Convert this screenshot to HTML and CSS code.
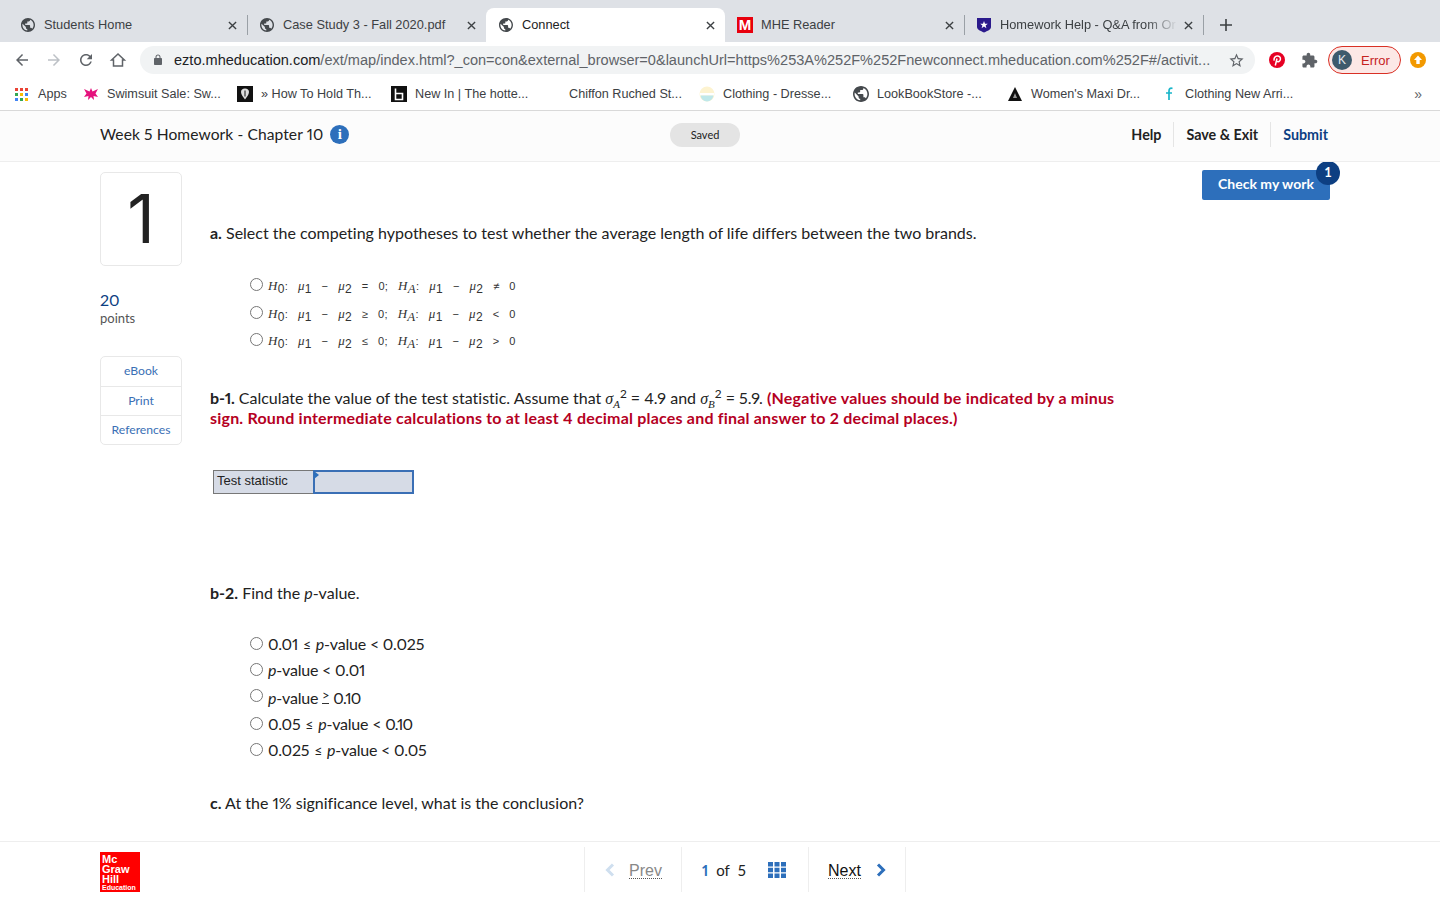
FILE: index.html
```html
<!DOCTYPE html>
<html lang="en">
<head>
  <meta charset="UTF-8" />
  <title>Connect</title>
  <link rel="stylesheet" href="styles.css">
</head>
<body>
  <svg class="sprite" xmlns="http://www.w3.org/2000/svg">
    <symbol id="globe" viewBox="2 2 20 20"><path d="M12 2C6.48 2 2 6.48 2 12s4.48 10 10 10 10-4.48 10-10S17.52 2 12 2zm-1 17.93c-3.95-.49-7-3.85-7-7.93 0-.62.08-1.21.21-1.79L9 15v1c0 1.1.9 2 2 2v1.93zm6.9-2.54c-.26-.81-1-1.39-1.9-1.39h-1v-3c0-.55-.45-1-1-1H8v-2h2c.55 0 1-.45 1-1V7h2c1.1 0 2-.9 2-2v-.41c2.93 1.19 5 4.06 5 7.41 0 2.08-.8 3.97-2.1 5.39z"/></symbol>
    <symbol id="close" viewBox="0 0 10 10"><path d="M1 1l8 8M9 1l-8 8" fill="none" stroke="currentColor" stroke-width="1.5"/></symbol>
  </svg>

  <div class="tabstrip">
    <div class="tab">
      <svg class="favicon"><use href="#globe"/></svg>
      <span class="tab-title">Students Home</span>
      <svg class="tab-close"><use href="#close"/></svg>
    </div>
    <div class="tab tab-sep">
      <svg class="favicon"><use href="#globe"/></svg>
      <span class="tab-title">Case Study 3 - Fall 2020.pdf</span>
      <svg class="tab-close"><use href="#close"/></svg>
    </div>
    <div class="tab tab-active">
      <svg class="favicon"><use href="#globe"/></svg>
      <span class="tab-title">Connect</span>
      <svg class="tab-close"><use href="#close"/></svg>
    </div>
    <div class="tab">
      <span class="favicon-m">M</span>
      <span class="tab-title">MHE Reader</span>
      <svg class="tab-close"><use href="#close"/></svg>
    </div>
    <div class="tab tab-sep tab-last">
      <svg class="favicon" viewBox="0 0 16 16"><path d="M1 1h14v9c0 2.5-3.5 4-7 5.5C4.500 14 1 12.500 1 10z" fill="#2b1a8c"/><path d="M8 4l1 2.700h2.800L9.600 8.400l.8 2.800L8 9.600l-2.400 1.600.8-2.800-2.200-1.700H7z" fill="#fff"/></svg>
      <span class="tab-title tab-fade">Homework Help - Q&amp;A from Or</span>
      <svg class="tab-close"><use href="#close"/></svg>
    </div>
    <svg class="tab-new" viewBox="0 0 12 12"><path d="M6 0v12M0 6h12" fill="none" stroke="#3c4043" stroke-width="1.600"/></svg>
  </div>

  <div class="toolbar">
    <svg class="nav-icon" viewBox="0 0 24 24"><path fill="#5f6368" d="M20 11H7.830l5.590-5.590L12 4l-8 8 8 8 1.410-1.410L7.830 13H20v-2z"/></svg>
    <svg class="nav-icon" viewBox="0 0 24 24"><path fill="#bdc1c6" d="M4 11h12.170l-5.590-5.590L12 4l8 8-8 8-1.410-1.410L16.170 13H4v-2z"/></svg>
    <svg class="nav-icon" viewBox="0 0 24 24"><path fill="#5f6368" d="M17.650 6.350C16.200 4.900 14.210 4 12 4c-4.420 0-7.990 3.580-7.990 8s3.570 8 7.990 8c3.730 0 6.840-2.550 7.730-6h-2.080c-.82 2.330-3.040 4-5.650 4-3.310 0-6-2.690-6-6s2.690-6 6-6c1.660 0 3.140.69 4.220 1.780L13 11h7V4l-2.350 2.350z"/></svg>
    <svg class="nav-icon" viewBox="0 0 24 24"><path fill="none" stroke="#5f6368" stroke-width="2" d="M12 4L3.500 12H6v8h12v-8h2.500z"/></svg>
    <div class="omnibox">
      <svg class="lock" viewBox="0 0 24 24"><path fill="#5f6368" d="M18 8h-1V6c0-2.760-2.240-5-5-5S7 3.240 7 6v2H6c-1.100 0-2 .9-2 2v10c0 1.100.9 2 2 2h12c1.100 0 2-.9 2-2V10c0-1.100-.9-2-2-2zM9 6c0-1.660 1.340-3 3-3s3 1.340 3 3v2H9V6z"/></svg>
      <span class="url"><b>ezto.mheducation.com</b>/ext/map/index.html?_con=con&amp;external_browser=0&amp;launchUrl=https%253A%252F%252Fnewconnect.mheducation.com%252F#/activit...</span>
      <svg class="star" viewBox="0 0 24 24"><path fill="#5f6368" d="M22 9.240l-7.190-.62L12 2 9.190 8.630 2 9.240l5.460 4.730L5.820 21 12 17.270 18.180 21l-1.630-7.030L22 9.240zM12 15.400l-3.760 2.270 1-4.280-3.320-2.880 4.380-.38L12 6.100l1.710 4.040 4.380.38-3.320 2.880 1 4.280L12 15.400z"/></svg>
    </div>
    <svg class="ext-pin" viewBox="0 0 16 16"><circle cx="8" cy="8" r="8" fill="#e60023"/><path d="M6.300 13.500L8 6.500M5.300 8.600C4.300 6.400 6 4 8.300 4c2.200 0 3.400 1.500 3.100 3.400-.3 1.900-2.500 3-3.600 1.800" fill="none" stroke="#fff" stroke-width="1.500"/></svg>
    <svg class="ext-puzzle" viewBox="0 0 24 24"><path fill="#5f6368" d="M20.500 11H19V7c0-1.100-.9-2-2-2h-4V3.500C13 2.120 11.880 1 10.500 1S8 2.120 8 3.500V5H4c-1.100 0-1.990.9-1.990 2v3.800H3.500c1.490 0 2.700 1.210 2.700 2.700s-1.210 2.700-2.700 2.700H2V20c0 1.100.9 2 2 2h3.800v-1.500c0-1.490 1.210-2.700 2.700-2.700 1.490 0 2.700 1.210 2.700 2.700V22H17c1.100 0 2-.9 2-2v-4h1.500c1.380 0 2.500-1.120 2.500-2.500S21.880 11 20.500 11z"/></svg>
    <div class="profile"><span class="avatar">K</span><span class="profile-error">Error</span></div>
    <svg class="update" viewBox="0 0 16 16"><circle cx="8" cy="8" r="8" fill="#f29900"/><path d="M8 3.500L12 8H9.700v4H6.300V8H4z" fill="#fff"/></svg>
  </div>

  <div class="bookmarks">
    <div class="bm bm-apps">
      <svg class="favicon" viewBox="0 0 13 13">
        <rect width="3" height="3" fill="#ea4335"/><rect x="5" width="3" height="3" fill="#ea4335"/><rect x="10" width="3" height="3" fill="#ea4335"/>
        <rect y="5" width="3" height="3" fill="#34a853"/><rect x="5" y="5" width="3" height="3" fill="#fbbc04"/><rect x="10" y="5" width="3" height="3" fill="#4285f4"/>
        <rect y="10" width="3" height="3" fill="#4285f4"/><rect x="5" y="10" width="3" height="3" fill="#34a853"/><rect x="10" y="10" width="3" height="3" fill="#fbbc04"/>
      </svg>
      <span>Apps</span>
    </div>
    <div class="bm">
      <svg class="favicon" viewBox="0 0 16 16"><path d="M8 2l1.500 3.500L15 3l-2.500 4.500L15 11l-4.500-1L11 14 8 11l-3 3 .5-4L1 11l2.500-3.500L1 3l5.500 2.500z" fill="#e5127d"/></svg>
      <span>Swimsuit Sale: Sw...</span>
    </div>
    <div class="bm">
      <svg class="favicon" viewBox="0 0 16 16"><rect width="16" height="16" fill="#111"/><path d="M8 2.500c2.500 0 4 1.500 4 3.500 0 3-2.500 5-4 7.500C6.500 11 4 9 4 6c0-2 1.500-3.500 4-3.500z" fill="#ddd"/><path d="M8 4.500v6" stroke="#111"/></svg>
      <span>» How To Hold Th...</span>
    </div>
    <div class="bm">
      <svg class="favicon" viewBox="0 0 16 16"><rect width="16" height="16" fill="#111"/><path d="M4.500 2.500v11h7v-6h-7" fill="none" stroke="#fff" stroke-width="1.600"/></svg>
      <span>New In | The hotte...</span>
    </div>
    <div class="bm">
      <span class="favicon"></span>
      <span>Chiffon Ruched St...</span>
    </div>
    <div class="bm">
      <svg class="favicon" viewBox="0 0 16 16"><circle cx="8" cy="8" r="7.500" fill="#fdf3d0"/><path d="M.8 7h14.400v2.500H.8z" fill="#fff"/><path d="M1.500 9.500h13A7.500 7.500 0 0 1 8 15.500a7.500 7.500 0 0 1-6.500-6z" fill="#bfe8ea"/></svg>
      <span>Clothing - Dresse...</span>
    </div>
    <div class="bm">
      <svg class="favicon"><use href="#globe"/></svg>
      <span>LookBookStore -...</span>
    </div>
    <div class="bm">
      <svg class="favicon" viewBox="0 0 16 16"><path d="M8 1l7 14H1z" fill="#111"/><path d="M8 7l2 5H6z" fill="#999"/></svg>
      <span>Women's Maxi Dr...</span>
    </div>
    <div class="bm">
      <svg class="favicon" viewBox="0 0 16 16"><path d="M11.500 2.500C9.500 1.500 8 2.500 8 5v9M5 7h6" fill="none" stroke="#19b5c9" stroke-width="1.700"/></svg>
      <span>Clothing New Arri...</span>
    </div>
    <span class="bm-more">»</span>
  </div>

  <header class="hw-header">
    <div class="hw-title">
      <span>Week 5 Homework - Chapter 10</span>
      <span class="info-icon">i</span>
    </div>
    <span class="saved-pill">Saved</span>
    <nav class="hw-actions">
      <a>Help</a>
      <a>Save &amp; Exit</a>
      <a class="submit-link">Submit</a>
    </nav>
  </header>

  <main class="content">
    <aside class="side">
      <div class="q-number">1</div>
      <div class="q-points"><span class="points-num">20</span><span class="points-label">points</span></div>
      <div class="side-links">
        <a>eBook</a>
        <a>Print</a>
        <a>References</a>
      </div>
    </aside>

    <section class="question">
      <p class="q-a"><b>a.</b> Select the competing hypotheses to test whether the average length of life differs between the two brands.</p>

      <div class="math-options">
        <label class="math-row"><input type="radio" name="hyp"><span class="math"><i>H</i><sub>0</sub>: <i>μ</i><sub>1</sub> − <i>μ</i><sub>2</sub> = 0; <i>H</i><sub><i>A</i></sub>: <i>μ</i><sub>1</sub> − <i>μ</i><sub>2</sub> ≠ 0</span></label>
        <label class="math-row"><input type="radio" name="hyp"><span class="math"><i>H</i><sub>0</sub>: <i>μ</i><sub>1</sub> − <i>μ</i><sub>2</sub> ≥ 0; <i>H</i><sub><i>A</i></sub>: <i>μ</i><sub>1</sub> − <i>μ</i><sub>2</sub> &lt; 0</span></label>
        <label class="math-row"><input type="radio" name="hyp"><span class="math"><i>H</i><sub>0</sub>: <i>μ</i><sub>1</sub> − <i>μ</i><sub>2</sub> ≤ 0; <i>H</i><sub><i>A</i></sub>: <i>μ</i><sub>1</sub> − <i>μ</i><sub>2</sub> &gt; 0</span></label>
      </div>

      <p class="q-b1"><b class="b1-tag">b-1.</b> Calculate the value of the test statistic. Assume that <span class="sigma"><i>σ</i><sub><i>A</i></sub></span><sup>2</sup> = 4.9 and <span class="sigma"><i>σ</i><sub><i>B</i></sub></span><sup>2</sup> = 5.9. <b class="warn">(Negative values should be indicated by a minus sign. Round intermediate calculations to at least 4 decimal places and final answer to 2 decimal places.)</b></p>

      <div class="stat-table">
        <span class="stat-label">Test statistic</span>
        <span class="stat-input"></span>
      </div>

      <p class="q-b2"><b>b-2.</b> Find the <i>p</i>-value.</p>

      <div class="p-options">
        <label class="p-row"><input type="radio" name="pval"><span>0.01 <span class="le">≤</span> <i>p</i>-value &lt; 0.025</span></label>
        <label class="p-row"><input type="radio" name="pval"><span><i>p</i>-value &lt; 0.01</span></label>
        <label class="p-row p-row-ge"><input type="radio" name="pval"><span><i>p</i>-value <span class="ge">&gt;</span> <span class="tight">0.10</span></span></label>
        <label class="p-row"><input type="radio" name="pval"><span>0.05 <span class="le">≤</span> <i>p</i>-value &lt; <span class="tight">0.10</span></span></label>
        <label class="p-row"><input type="radio" name="pval"><span>0.025 <span class="le">≤</span> <i>p</i>-value &lt; 0.05</span></label>
      </div>

      <p class="q-c"><b>c.</b> At the 1% significance level, what is the conclusion?</p>
    </section>

    <div class="check-wrap">
      <button class="check-btn">Check my work<span class="check-badge">1</span></button>
    </div>
  </main>

  <footer class="hw-footer">
    <div class="mh-logo">
      <span>Mc</span><span>Graw</span><span>Hill</span><span class="mh-edu">Education</span>
    </div>
    <div class="pager">
      <div class="pager-cell pager-prev">
        <svg class="chev" viewBox="0 0 10 14"><path d="M8 1.500L2.500 7 8 12.500" fill="none" stroke="#cfdfef" stroke-width="3"/></svg>
        <a>Prev</a>
      </div>
      <div class="pager-cell pager-mid">
        <span class="page-now">1</span><span class="page-of">of</span><span class="page-total">5</span>
        <svg class="grid-icon" viewBox="0 0 18 16">
          <path fill="#2d6fbb" d="M0 0h5v4.500H0zM6.500 0h5v4.500h-5zM13 0h5v4.500h-5zM0 5.800h5v4.500H0zM6.500 5.800h5v4.500h-5zM13 5.800h5v4.500h-5zM0 11.500h5V16H0zM6.500 11.500h5V16h-5zM13 11.500h5V16h-5z"/>
        </svg>
      </div>
      <div class="pager-cell pager-next">
        <a>Next</a>
        <svg class="chev" viewBox="0 0 10 14"><path d="M2 1.500L7.500 7 2 12.500" fill="none" stroke="#2d6fbb" stroke-width="3"/></svg>
      </div>
    </div>
  </footer>
</body>
</html>
```

FILE: styles.css
```css
* {
  box-sizing: border-box;
}

html, body {
  margin: 0;
  height: 100%;
}

body {
  width: 1440px;
  height: 900px;
  overflow: hidden;
  display: flex;
  flex-direction: column;
  font-family: 'Lato', sans-serif;
  font-variant-ligatures: none;
  font-variant-numeric: proportional-nums;
  color: #222;
  background-color: #fff;
}

p {
  margin: 0;
}

.sprite {
  display: none;
}

/* browser chrome */
.tabstrip {
  height: 42px;
  flex: none;
  display: flex;
  align-items: flex-end;
  padding-left: 8px;
  background-color: #dee1e6;
  font-family: 'Liberation Sans', sans-serif;
  font-size: 12.800px;
  color: #3c4043;
}

.tab {
  position: relative;
  width: 239px;
  height: 34px;
  display: flex;
  align-items: center;
  padding: 0 10px 0 12px;
  border-radius: 8px 8px 0 0;
}

.tab-sep::before,
.tab-last::after {
  content: '';
  position: absolute;
  top: 7px;
  left: 0;
  width: 1px;
  height: 20px;
  background-color: #9aa0a6;
}

.tab-last::after {
  left: auto;
  right: -1px;
}

.tab-active {
  background-color: #fff;
  color: #222;
}

.favicon {
  width: 16px;
  height: 16px;
  flex: none;
  fill: #45494d;
}

.tab .favicon {
  width: 14px;
  height: 14px;
  margin: 0 1px;
}

.tab-last .favicon {
  width: 16px;
  height: 16px;
  margin: 0;
}

.favicon-m {
  width: 16px;
  height: 16px;
  flex: none;
  background-color: #e8000d;
  color: #fff;
  font-weight: 700;
  font-size: 15px;
  line-height: 16px;
  text-align: center;
}

.tab-title {
  flex: 1;
  min-width: 0;
  margin: 0 0 2px 8px;
  white-space: nowrap;
  overflow: hidden;
}

.tab-fade {
  -webkit-mask-image: linear-gradient(to right, #000 82%, transparent 100%);
}

.tab-close {
  width: 9px;
  height: 9px;
  flex: none;
  margin-left: 6px;
  color: #3c4043;
}

.tab-new {
  width: 12px;
  height: 12px;
  align-self: center;
  margin: 8px 0 0 17px;
}

.toolbar {
  height: 36px;
  flex: none;
  display: flex;
  align-items: center;
  padding-left: 13px;
  background-color: #fff;
}

.nav-icon {
  width: 18px;
  height: 18px;
  flex: none;
  margin-right: 14px;
}

.omnibox {
  width: 1115px;
  height: 28px;
  flex: none;
  display: flex;
  align-items: center;
  margin-left: -1px;
  padding: 0 10px 0 12px;
  border-radius: 14px;
  background-color: #f1f3f4;
  font-family: 'Liberation Sans', sans-serif;
  font-size: 14.560px;
  color: #5f6368;
}

.lock {
  width: 12px;
  height: 12px;
  flex: none;
  margin-right: 10px;
}

.url {
  flex: 1;
  white-space: nowrap;
  overflow: hidden;
}

.url b {
  font-weight: 400;
  color: #202124;
}

.star {
  width: 17px;
  height: 17px;
  flex: none;
}

.ext-pin {
  width: 16px;
  height: 16px;
  flex: none;
  margin-left: 14px;
}

.ext-puzzle {
  width: 17px;
  height: 17px;
  flex: none;
  margin-left: 16px;
}

.profile {
  width: 73px;
  height: 28px;
  flex: none;
  display: flex;
  align-items: center;
  margin-left: 10px;
  padding-left: 3px;
  border: 1px solid #d93025;
  border-radius: 14px;
  background-color: #fce8e6;
  font-family: 'Liberation Sans', sans-serif;
  font-size: 13px;
  color: #c5221f;
}

.avatar {
  width: 20px;
  height: 20px;
  flex: none;
  margin-right: 9px;
  border-radius: 50%;
  background-color: #3d5a6c;
  color: #e5e9ec;
  font-size: 12px;
  line-height: 20px;
  text-align: center;
}

.update {
  width: 16px;
  height: 16px;
  flex: none;
  margin-left: 9px;
}

.bookmarks {
  height: 33px;
  flex: none;
  display: flex;
  align-items: center;
  padding-left: 15px;
  border-bottom: 1px solid #d9d9d9;
  background-color: #fff;
  font-family: 'Liberation Sans', sans-serif;
  font-size: 12.650px;
  color: #3c4043;
}

.bm {
  width: 154px;
  flex: none;
  display: flex;
  align-items: center;
  gap: 8px;
  white-space: nowrap;
}

.bm-apps {
  width: 68px;
  gap: 10px;
}

.bm-apps .favicon {
  width: 13px;
  height: 13px;
}

.bm-more {
  margin-left: auto;
  margin-right: 18px;
  font-size: 14px;
  color: #5f6368;
}

/* assignment header */
.hw-header {
  height: 51px;
  flex: none;
  display: flex;
  align-items: center;
  padding: 0 112px 2px 100px;
  border-bottom: 1px solid #eee;
  background-color: #fcfcfc;
}

.hw-title {
  width: 570px;
  display: flex;
  align-items: center;
  gap: 7px;
  margin-top: -2px;
  font-size: 15.600px;
  letter-spacing: .08px;
  color: #222;
}

.info-icon {
  width: 19px;
  height: 19px;
  border-radius: 50%;
  background-color: #2d6fbb;
  color: #fff;
  font-family: 'Liberation Serif', serif;
  font-weight: 700;
  font-size: 15px;
  line-height: 19px;
  text-align: center;
}

.saved-pill {
  width: 70px;
  height: 24px;
  border-radius: 12px;
  background-color: #e4e4e4;
  font-size: 11px;
  line-height: 24px;
  text-align: center;
}

.hw-actions {
  margin-left: auto;
  margin-top: -2px;
  display: flex;
  align-items: center;
  font-size: 14.300px;
  font-weight: 700;
}

.hw-actions a {
  padding: 4px 12px;
  border-left: 1px solid #e5e5e5;
}

.hw-actions a:first-child {
  border-left: none;
}

.hw-actions a:last-child {
  padding-right: 0;
}

.submit-link {
  color: #0d3f82;
}

/* question area */
.content {
  flex: 1;
  min-height: 0;
  overflow: hidden;
  display: grid;
  grid-template-columns: 82px 920px 1fr;
  column-gap: 28px;
  padding: 10px 110px 0 100px;
  align-items: start;
}

.side {
  display: flex;
  flex-direction: column;
}

.q-number {
  height: 94px;
  border: 1px solid #e8e8e8;
  border-radius: 5px;
  font-family: 'Inter', sans-serif;
  font-size: 68px;
  line-height: 90px;
  text-align: center;
  color: #222;
}

.q-points {
  display: flex;
  flex-direction: column;
  margin-top: 25px;
}

.points-num {
  font-size: 16px;
  line-height: 18px;
  color: #0d3f82;
}

.points-label {
  font-size: 13px;
  line-height: 18px;
  color: #555;
}

.side-links {
  margin-top: 29px;
  display: flex;
  flex-direction: column;
  border: 1px solid #e8e8e8;
  border-radius: 5px;
  font-size: 12.200px;
  text-align: center;
  color: #3a6fb5;
}

.side-links a {
  height: 29px;
  line-height: 28px;
  border-top: 1px solid #e8e8e8;
}

.side-links a:first-child {
  border-top: none;
}

.question {
  padding-top: 51px;
  font-size: 16px;
  line-height: 20px;
  color: #222;
}

.math-options {
  margin-top: 35px;
  padding-left: 40px;
}

.math-row {
  display: flex;
  align-items: flex-start;
  height: 27.500px;
}

input[type="radio"] {
  appearance: none;
  width: 13px;
  height: 13px;
  flex: none;
  margin: 0 5px 0 0;
  border: 1px solid #767676;
  border-radius: 50%;
  background-color: #fff;
}

.math {
  font-family: 'Liberation Sans', sans-serif;
  font-size: 11px;
  line-height: 14px;
  word-spacing: 6.500px;
  letter-spacing: .3px;
  padding-top: 1px;
  color: #333;
}

.math i {
  font-family: 'Liberation Serif', serif;
  font-size: 13px;
}

.math sub {
  font-size: 12px;
  line-height: 0;
}

.q-b1 {
  margin-top: 27px;
}

.b1-tag {
  letter-spacing: -.2px;
}

.sigma {
  font-family: 'Liberation Serif', serif;
  line-height: 0;
}

.sigma sub {
  font-size: 11px;
  line-height: 0;
}

.q-b1 sup {
  font-size: 12px;
  line-height: 0;
}

.warn {
  color: #b5001f;
  letter-spacing: .2px;
}

.stat-table {
  margin: 42px 0 0 3px;
  width: 201px;
  height: 24px;
  display: flex;
  background-color: #d6dbe6;
  font-family: 'Liberation Sans', sans-serif;
  font-size: 13px;
  line-height: 20px;
  color: #222;
}

.stat-label {
  width: 100px;
  padding-left: 3px;
  border: 1px solid #777;
  border-right: none;
}

.stat-input {
  position: relative;
  flex: 1;
  border: 2px solid #3a6fb5;
}

.stat-input::before {
  content: '';
  position: absolute;
  top: -1px;
  left: -1px;
  border-left: 5px solid #2d6fbb;
  border-top: 4px solid transparent;
  border-bottom: 4px solid transparent;
}

.q-b2 {
  margin-top: 89px;
}

.p-options {
  margin-top: 33px;
  padding-left: 40px;
}

.p-row {
  display: flex;
  align-items: flex-start;
  height: 26px;
  letter-spacing: -.2px;
}

.p-row-ge {
  height: 28px;
}

.p-row input {
  margin-top: 1px;
}

.p-row > span {
  margin-top: -2px;
}

.p-row-ge > span {
  margin-top: 0;
}

.le {
  font-size: 14px;
  margin: 0 1px;
}

.ge {
  display: inline-block;
  border-bottom: 1.500px solid #333;
  height: 14px;
  line-height: 10px;
  font-size: 13px;
  vertical-align: 4px;
}

.tight {
  letter-spacing: -.8px;
}

.q-c {
  margin-top: 25px;
}

.check-wrap {
  display: flex;
  justify-content: flex-end;
  margin-top: -2px;
}

.check-btn {
  position: relative;
  width: 128px;
  height: 30px;
  padding: 0 0 3px;
  border: none;
  border-radius: 2px;
  background-color: #2d6fbb;
  color: #fff;
  font-family: inherit;
  font-size: 14px;
  font-weight: 700;
}

.check-badge {
  position: absolute;
  top: -9px;
  right: -10px;
  width: 24px;
  height: 24px;
  border-radius: 50%;
  background-color: #0d3f82;
  font-size: 13px;
  line-height: 22px;
  text-align: center;
}

/* bottom bar */
.hw-footer {
  height: 59px;
  flex: none;
  display: flex;
  align-items: flex-start;
  padding-left: 100px;
  border-top: 1px solid #eee;
  background-color: #fff;
}

.mh-logo {
  width: 40px;
  height: 40px;
  margin-top: 10px;
  padding: 2px 0 0 2px;
  display: flex;
  flex-direction: column;
  background-color: #f00;
  color: #fff;
  font-family: 'Liberation Sans', sans-serif;
  font-size: 11px;
  font-weight: 700;
  line-height: 10px;
}

.mh-edu {
  font-size: 7px;
  line-height: 8px;
}

.pager {
  margin: 5px 0 0 444px;
  height: 45px;
  display: flex;
  border-right: 1px solid #eee;
  font-family: 'Liberation Sans', sans-serif;
  font-size: 16px;
}

.pager-cell {
  display: flex;
  align-items: center;
  border-left: 1px solid #eee;
}

.pager a {
  margin-top: 3px;
  border-bottom: 1px dotted #555;
  line-height: 15px;
}

.chev {
  width: 10px;
  height: 14px;
}

.pager-prev {
  width: 97px;
  gap: 14px;
  padding-left: 20px;
  color: #888;
}

.pager-mid {
  width: 127px;
  padding-left: 20px;
  font-family: 'Lato', sans-serif;
  font-size: 15px;
}

.page-now {
  font-weight: 700;
  color: #2d6fbb;
}

.page-of {
  margin-left: 8px;
}

.page-total {
  margin-left: 8px;
}

.grid-icon {
  width: 18px;
  height: 16px;
  margin-left: 22px;
}

.pager-next {
  width: 97px;
  gap: 15px;
  padding-left: 19px;
  color: #111;
}
```
